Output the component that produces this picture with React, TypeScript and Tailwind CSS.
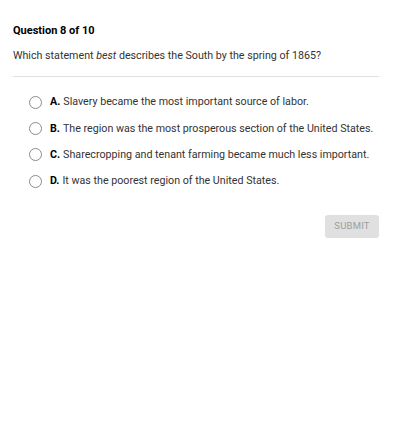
import React from "react";

const options = [
  { letter: "A.", text: "Slavery became the most important source of labor." },
  { letter: "B.", text: "The region was the most prosperous section of the United States." },
  { letter: "C.", text: "Sharecropping and tenant farming became much less important." },
  { letter: "D.", text: "It was the poorest region of the United States." },
];

export default function App() {
  return (
    <div className="w-[414px] h-[445px] bg-white font-['Roboto',sans-serif] text-[#212121]">
      <div className="pl-[13px] pr-[35px] pt-[24px]">
        <div className="text-[11px] font-bold leading-[14px] text-black">Question 8 of 10</div>
        <div className="mt-[11px] text-[10.7px] leading-[14px] text-[#333]">
          Which statement <i>best</i> describes the South by the spring of 1865?
        </div>
        <div className="mt-[13px] h-px bg-[#e0e0e0]" />
        <div className="mt-[18px] flex flex-col gap-[11.6px] pl-[16px]">
          {options.map((o) => (
            <div key={o.letter} className="flex items-center h-[14.7px]">
              <span className="w-[13px] h-[13px] rounded-full border border-[#8a8a8a] bg-white shrink-0" />
              <span className="ml-[8px] text-[10.7px] leading-[14px] text-[#333]">
                <b className="font-bold text-black mr-[3px]">{o.letter}</b>
                {o.text}
              </span>
            </div>
          ))}
        </div>
        <div className="mt-[26px] flex justify-end">
          <button className="w-[54px] h-[23px] rounded-[3px] bg-[#e0e0e0] text-[9.5px] text-[#9e9e9e] tracking-[0.2px]">
            SUBMIT
          </button>
        </div>
      </div>
    </div>
  );
}
